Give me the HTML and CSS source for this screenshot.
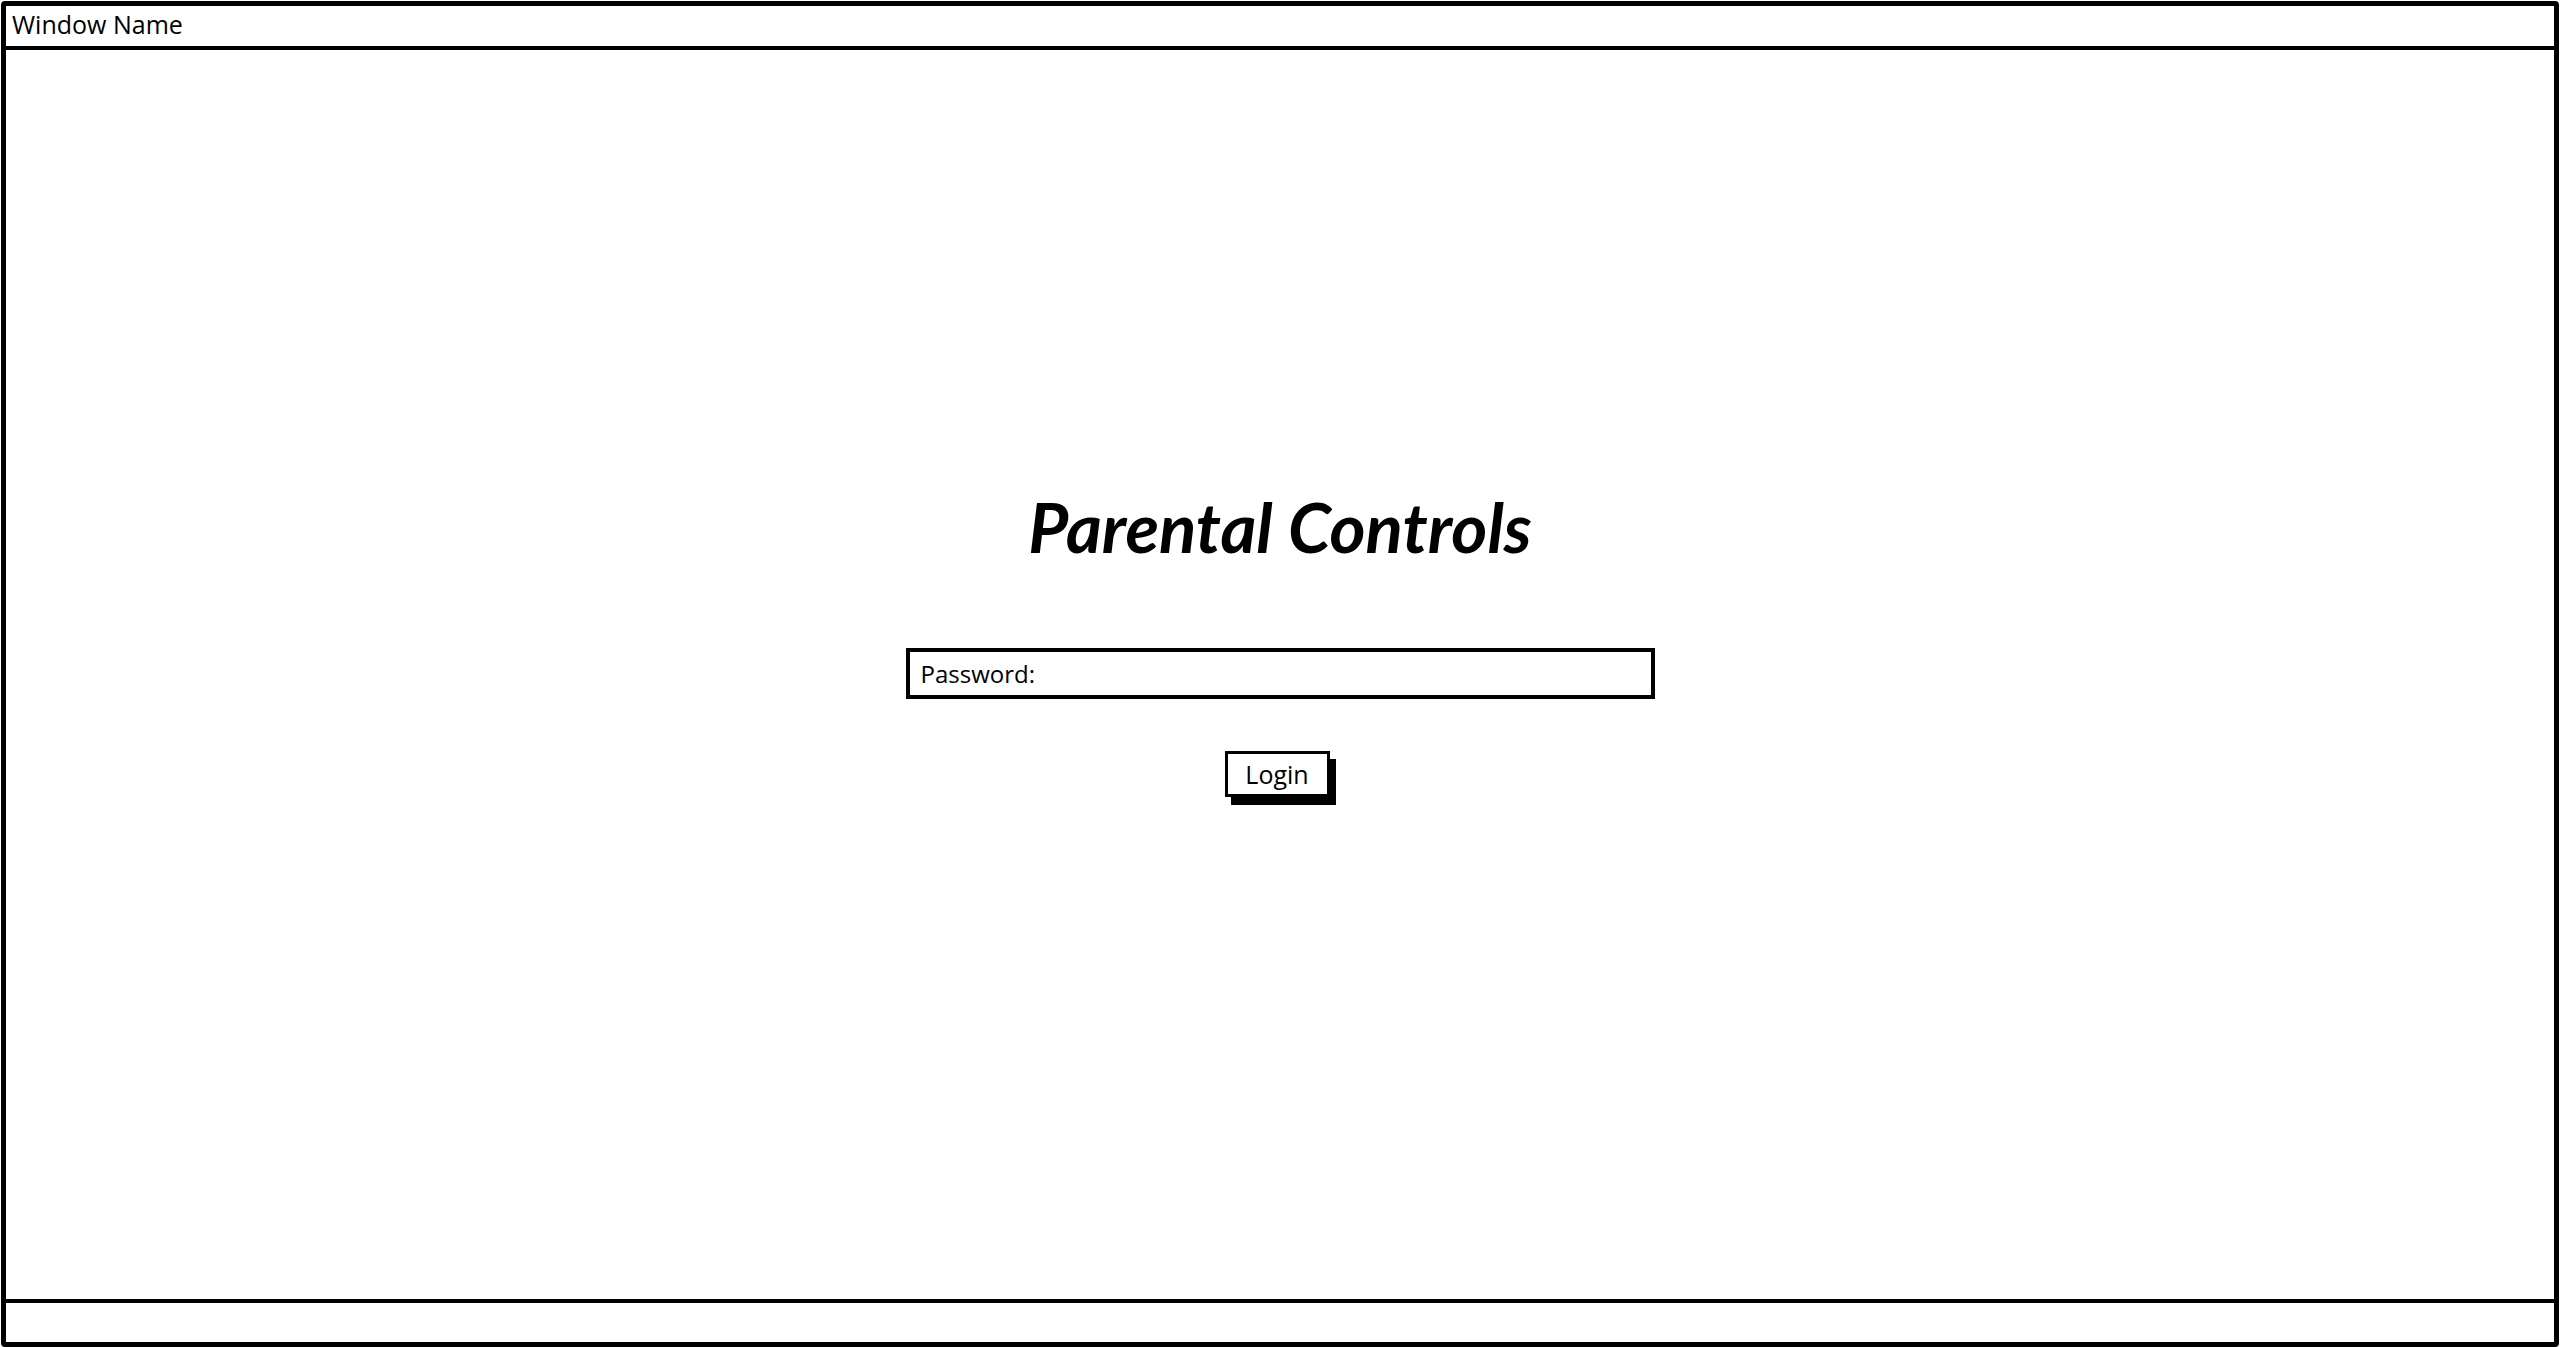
FILE: index.html
```html
<!DOCTYPE html>
<html lang="en">

<head>
    <meta charset="UTF-8">
    <title>Parental Controls</title>
    <link rel="stylesheet" href="styles.css">
</head>

<body>
    <div class="vindue">
        <header class="titellinje">Window Name</header>
        <main>
            <h1>Parental Controls</h1>
            <label class="felt">Password:</label>
            <button class="login">Login</button>
        </main>
        <footer class="bundlinje"></footer>
    </div>
</body>

</html>
```

FILE: styles.css
```css
* {
    box-sizing: border-box;
}

body {
    margin: 0;
    background-color: white;
    font-family: "Open Sans", "Noto Sans", sans-serif;
    color: black;
}

.vindue {
    display: flex;
    flex-direction: column;
    margin: 1px;
    height: 1346px;
    border: 5px solid black;
    border-radius: 4px;
}

.titellinje {
    height: 44px;
    padding: 2px 0 0 6px;
    border-bottom: 4px solid black;
    font-size: 25px;
    line-height: 32px;
}

main {
    flex: 1;
    display: flex;
    flex-direction: column;
    align-items: center;
    padding-top: 437px;
}

h1 {
    margin: 0;
    font-family: Lato, sans-serif;
    font-style: italic;
    font-weight: bold;
    font-size: 69px;
    line-height: 80px;
}

.felt {
    display: flex;
    align-items: center;
    width: 749px;
    height: 51px;
    margin-top: 81px;
    padding-left: 11px;
    border: 4px solid black;
    font-size: 24px;
}

.login {
    width: 105px;
    height: 46px;
    margin-top: 52px;
    margin-right: 6px;
    border: 3px solid black;
    background-color: white;
    box-shadow: 6px 8px 0 black;
    font-family: "Open Sans", sans-serif;
    font-size: 25px;
    padding: 0;
    cursor: pointer;
}

.bundlinje {
    height: 43px;
    border-top: 4px solid black;
}
```
